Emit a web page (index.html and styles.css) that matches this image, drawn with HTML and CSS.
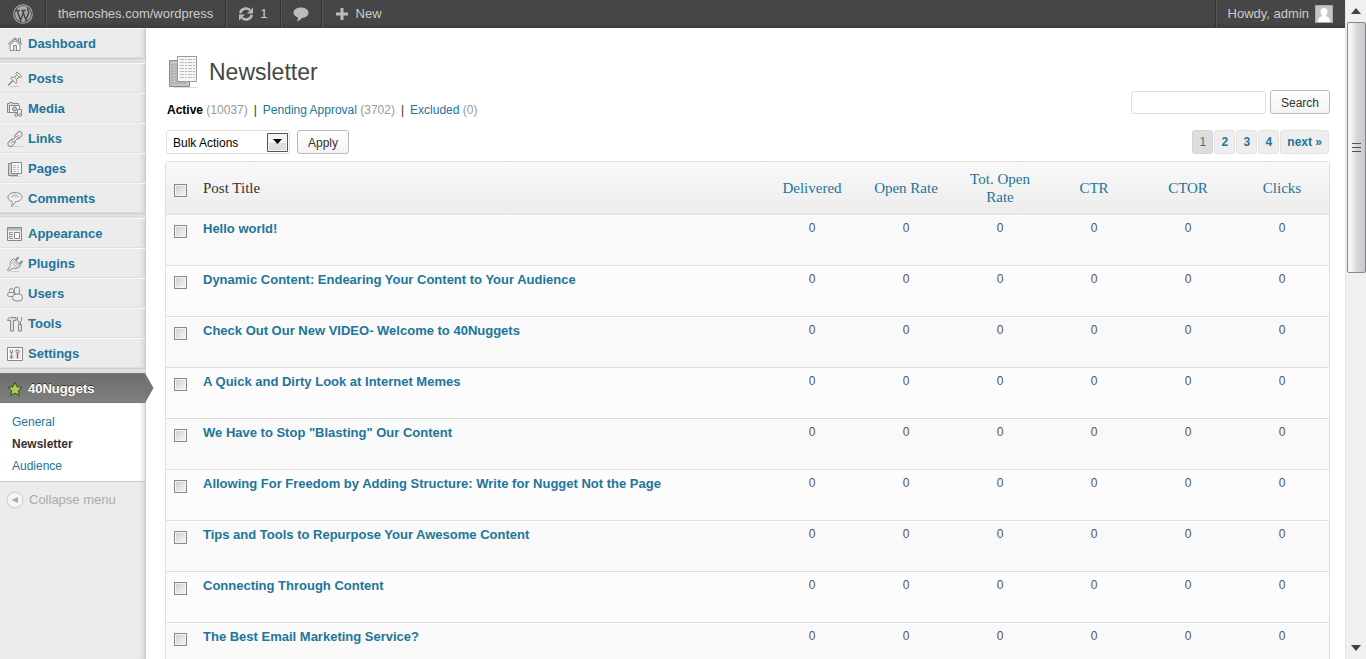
FILE: index.html
```html
<!DOCTYPE html>
<html lang="en">
<head>
  <meta charset="UTF-8">
  <meta name="viewport" content="width=device-width, initial-scale=1.0">
  <title>Newsletter</title>
  <link rel="stylesheet" href="styles.css">
</head>
<body>

<div class="screen">

  <header class="adminbar">
    <a href="#" class="bar-item bar-logo" aria-label="WordPress">
      <svg width="20" height="20" viewBox="0 0 20 20"><circle cx="10" cy="10" r="9.3" fill="none" stroke="#aaa" stroke-width="1.1"/><circle cx="10" cy="10" r="7.9" fill="#aaa"/><path d="M2.6 6.6h4.2M8.4 6.6h4.4M4.2 6.8l3.4 9.4 2.6-7.2M9.6 6.8l3.5 9.4 2.5-7.4c.5-1.6-.9-2.4-.9-3.6 0-.8.4-1.3 1-1.6" fill="none" stroke="#464646" stroke-width="1.5"/></svg>
    </a>
    <a href="#" class="bar-item">themoshes.com/wordpress</a>
    <a href="#" class="bar-item">
      <svg width="16" height="16" viewBox="0 0 16 16"><path d="M2.2 7.2A5.8 5.8 0 0 1 12 4.2M13.8 8.8A5.8 5.8 0 0 1 4 11.8" fill="none" stroke="#bbb" stroke-width="2.4"/><path d="M15 1.4v6H9zM1 14.600V8.600h6z" fill="#bbb"/></svg>
      1
    </a>
    <a href="#" class="bar-item" aria-label="Comments">
      <svg width="16" height="16" viewBox="0 0 16 16"><path d="M8 1.500c4 0 7.500 2.200 7.500 5.200s-3 5-6.800 5.200C7.600 13.800 5.800 15 3.800 15.200c.9-.9 1.300-2.400 1.200-3.700C2.600 10.800.5 9 .5 6.700c0-3 3.500-5.200 7.500-5.200z" fill="#bbb"/></svg>
    </a>
    <a href="#" class="bar-item bar-new">
      <svg width="12" height="12" viewBox="0 0 12 12"><path d="M4.500 0h3v4.500H12v3H7.500V12h-3V7.500H0v-3h4.500z" fill="#bbb"/></svg>
      New
    </a>
    <a href="#" class="bar-item bar-user">
      Howdy, admin
      <svg width="18" height="18" viewBox="0 0 18 18"><path d="M0 0h18v18H0z" fill="#c4c4c4"/><path d="M.5.5h17v17H.5z" fill="none" stroke="#aaa"/><path d="M9 3c2.200 0 3.500 1.500 3.500 3.800 0 1.600-.7 2.900-1.600 3.700.2 1.200 4.100 1.500 4.100 5V17H3v-1.500c0-3.500 3.900-3.800 4.100-5-.9-.8-1.600-2.100-1.600-3.700C5.500 4.500 6.800 3 9 3z" fill="#fff"/></svg>
    </a>
  </header>

  <div class="columns">

    <nav class="menu">
      <ul class="menu-group">
        <li><a href="#"><svg viewBox="0 0 16 16"><path d="M11.500 5V2.500h2V7" fill="#eee" stroke="#888"/><path d="M3 7.500v7h10v-7L8 3z" fill="#fff" stroke="#888"/><path d="M.8 8.500L8 1.700l7.200 6.800M3.500 9L8 4.700 12.500 9" fill="none" stroke="#888"/><path d="M6.500 14.500v-5h3v5" fill="#ddd" stroke="#888"/></svg>Dashboard</a></li>
      </ul>
      <ul class="menu-group">
        <li><a href="#"><svg viewBox="0 0 16 16"><path d="M3 15.500h9" stroke="#ccc"/><path d="M1 14.500l5-5" stroke="#888" stroke-width="1.200"/><path d="M3.500 7c1.200-1 3-1 4-.5l2-2.500-.5-1.500 1-1.500 5 4.500-1.500 1-1.500-.3-2.500 2.300c.5 1.200.3 3-.5 4z" fill="#eee" stroke="#888"/><path d="M7.500 6.500l2.500 2.200M9.500 4l3 2.500" stroke="#999"/></svg>Posts</a></li>
        <li><a href="#"><svg viewBox="0 0 16 16"><path d="M3.500 11.500h-3v-9h2v-1h3v1h6v1" fill="#ddd" stroke="#888"/><path d="M2.500 4.500h10v7h-10z" fill="#f4f4f4" stroke="#888"/><circle cx="7.500" cy="8" r="2" fill="#ccc" stroke="#777"/><path d="M10.500 14.500v-6h4v6" fill="#ececec" stroke="#888"/><circle cx="9.200" cy="14" r="1.400" fill="#eee" stroke="#888"/><circle cx="13.200" cy="14" r="1.400" fill="#eee" stroke="#888"/></svg>Media</a></li>
        <li><a href="#"><svg viewBox="0 0 16 16"><path d="M4 15.500h12" stroke="#ccc"/><g fill="none" stroke="#888"><rect x="7.500" y="1.800" width="8" height="5" rx="2.500" transform="rotate(-45 11.500 4.300)" fill="#eee"/><rect x=".5" y="9.300" width="8" height="5" rx="2.500" transform="rotate(-45 4.500 11.800)" fill="#eee"/><path d="M10.500 5.300l1.800-1.800M3.700 12.600l1.800-1.800"/><path d="M5 9.600l4.600-4.600 1.600 1.600-4.600 4.600z" fill="#f4f4f4"/></g></svg>Links</a></li>
        <li><a href="#"><svg viewBox="0 0 16 16"><path d="M1.500 2.500h9v12h-9z" fill="#ccc" stroke="#888"/><path d="M4.500 1.500h10v11h-10z" fill="#f8f8f8" stroke="#888"/><path d="M6 4.500h7M6 6.500h7M6 8.500h7M6 10.500h7" stroke="#bbb" stroke-dasharray="3 1 2 1"/><path d="M3 15.500h10" stroke="#ccc"/></svg>Pages</a></li>
        <li><a href="#"><svg viewBox="0 0 16 16"><path d="M3 15.500h9" stroke="#ccc"/><path d="M8 1.500c4 0 7 2 7 4.500s-2.500 4.500-6.500 4.700c-.5 2-2 3.300-4 3.800.8-1.200 1-2.700.6-4.100C2.600 9.800 1 8.200 1 6c0-2.500 3-4.500 7-4.500z" fill="#f2f2f2" stroke="#888"/><path d="M3 6.500c1-2 3-3.500 5-3.500s4 1.500 5 3.500z" fill="#ccc"/></svg>Comments</a></li>
      </ul>
      <ul class="menu-group">
        <li><a href="#"><svg viewBox="0 0 16 16"><path d="M.5 1.500h14v13H.5z" fill="#f2f2f2" stroke="#888"/><path d="M1 2h13v2.500H1z" fill="#bbb"/><path d="M7.500 6.500h5v6h-5z" fill="#fff" stroke="#888"/><path d="M2 6.500h4M2 8.500h4M2 10.500h4M2 12.500h4M2.500 6v3M2.500 10v3" fill="none" stroke="#999"/></svg>Appearance</a></li>
        <li><a href="#"><svg viewBox="0 0 16 16"><path d="M3 15.500h9" stroke="#ccc"/><path d="M8.500 5l3-4M12 8.500l3.500-3.500" stroke="#888" stroke-width="2"/><path d="M6.500 2.500l7.500 7c-2.500 2.500-5.500 3.500-8 2.500L1.500 15 .5 14l3-4.500C2.500 7 4.500 4 6.500 2.500z" fill="#eee" stroke="#888"/><path d="M5 6.500l5 5M6 4.500l6 5.500" stroke="#999"/></svg>Plugins</a></li>
        <li><a href="#"><svg viewBox="0 0 16 16"><g fill="#eee" stroke="#888"><rect x="2.500" y="2.500" width="4" height="5" rx="2"/><rect x=".5" y="6.500" width="7" height="4" rx="2"/><rect x="7.500" y="1" width="5" height="7.500" rx="2.500"/><rect x="5.500" y="8" width="10" height="7" rx="3.500"/></g></svg>Users</a></li>
        <li><a href="#"><svg viewBox="0 0 16 16"><path d="M.5 4.500c.5-2 1.500-3 3-3H9v3H6.500V15h-3V4.500z" fill="#ddd" stroke="#888"/><path d="M10.500 1v3.500l1.500 1V9h1.500V5.500l1-1V1" fill="none" stroke="#888"/><path d="M11.500 8.500h3V15h-3z" fill="#ddd" stroke="#888"/></svg>Tools</a></li>
        <li><a href="#"><svg viewBox="0 0 16 16"><path d="M.5 1.500h15v13H.5z" fill="#fff" stroke="#888"/><path d="M2 3h12v10H2z" fill="#ececec"/><path d="M3.500 4v2.500h2V4M4.500 7v2" fill="none" stroke="#888"/><path d="M3.500 9.500h2v3h-2z" fill="#777"/><circle cx="10.500" cy="5.500" r="1.500" fill="none" stroke="#777"/><path d="M10.500 7v5.500" stroke="#777" stroke-width="1.500"/></svg>Settings</a></li>
      </ul>
      <ul class="menu-group">
        <li class="current">
          <a href="#"><svg viewBox="0 0 16 16"><path d="M8 1.200l2 4.600 5 .5-3.700 3.400 1.100 5L8 12.100l-4.400 2.600 1.100-5L1 6.300l5-.5z" fill="#a5d14c" stroke="#3c4a24"/></svg>40Nuggets</a>
          <svg class="menu-arrow" viewBox="0 0 9 30"><path d="M0 0l8.500 15L0 30z" fill="#757575"/></svg>
        </li>
      </ul>
      <ul class="submenu">
        <li><a href="#">General</a></li>
        <li><a href="#" class="active">Newsletter</a></li>
        <li><a href="#">Audience</a></li>
      </ul>
      <button type="button" class="collapse">
        <svg width="18" height="18" viewBox="0 0 18 18"><circle cx="9" cy="9" r="8" fill="#f4f4f4" stroke="#ccc"/><path d="M12 6v6L5.500 9z" fill="#aaa"/></svg>
        Collapse menu
      </button>
    </nav>

    <main class="content">
      <div class="title">
        <svg width="32" height="34" viewBox="0 0 32 34"><path d="M6 32.500h24" stroke="#ddd"/><path d="M1.500 5.500h20v26h-20z" fill="#c4c4c4" stroke="#888"/><path d="M3 10h6M3 13h6M3 16h6M3 19h6M3 22h6M3 25h6M3 28h16" stroke="#999" stroke-dasharray="3 1"/><path d="M9.500 1.500h19v25h-19z" fill="#f6f6f6" stroke="#999"/><path d="M12 4.500h15M12 7.500h15M12 10.500h15M12 13.500h15M12 16.500h15M12 19.500h15M12 22.500h15" stroke="#bbb" stroke-dasharray="4 1 2 1"/></svg>
        <h1>Newsletter</h1>
      </div>

      <div class="filters">
        <ul class="views">
          <li><a href="#" class="active">Active <span>(10037)</span></a></li>
          <li><a href="#">Pending Approval <span>(3702)</span></a></li>
          <li><a href="#">Excluded <span>(0)</span></a></li>
        </ul>
        <form class="search">
          <input type="text" aria-label="Search newsletters">
          <button type="button" class="button">Search</button>
        </form>
      </div>

      <div class="tablenav">
        <div class="bulk">
          <div class="select">
            <select aria-label="Bulk Actions">
              <option>Bulk Actions</option>
            </select>
            <svg width="21" height="19" viewBox="0 0 21 19"><path d="M.5.5h20v18H.5z" fill="#f4f4f4" stroke="#555"/><path d="M2 10h17v7H2z" fill="#ddd"/><path d="M6 6h9l-4.500 5z" fill="#000"/></svg>
          </div>
          <button type="button" class="button">Apply</button>
        </div>
        <div class="pages">
          <a href="#" class="active">1</a>
          <a href="#">2</a>
          <a href="#">3</a>
          <a href="#">4</a>
          <a href="#">next »</a>
        </div>
      </div>

      <table class="posts">
        <thead>
          <tr>
            <th class="check"><input type="checkbox" aria-label="Select all"></th>
            <th class="name">Post Title</th>
            <th><a href="#">Delivered</a></th>
            <th><a href="#">Open Rate</a></th>
            <th><a href="#">Tot. Open Rate</a></th>
            <th><a href="#">CTR</a></th>
            <th><a href="#">CTOR</a></th>
            <th><a href="#">Clicks</a></th>
          </tr>
        </thead>
        <tbody>
          <tr>
            <td class="check"><input type="checkbox" aria-label="Select post"></td>
            <td class="name"><a href="#">Hello world!</a></td>
            <td>0</td><td>0</td><td>0</td><td>0</td><td>0</td><td>0</td>
          </tr>
          <tr>
            <td class="check"><input type="checkbox" aria-label="Select post"></td>
            <td class="name"><a href="#">Dynamic Content: Endearing Your Content to Your Audience</a></td>
            <td>0</td><td>0</td><td>0</td><td>0</td><td>0</td><td>0</td>
          </tr>
          <tr>
            <td class="check"><input type="checkbox" aria-label="Select post"></td>
            <td class="name"><a href="#">Check Out Our New VIDEO- Welcome to 40Nuggets</a></td>
            <td>0</td><td>0</td><td>0</td><td>0</td><td>0</td><td>0</td>
          </tr>
          <tr>
            <td class="check"><input type="checkbox" aria-label="Select post"></td>
            <td class="name"><a href="#">A Quick and Dirty Look at Internet Memes</a></td>
            <td>0</td><td>0</td><td>0</td><td>0</td><td>0</td><td>0</td>
          </tr>
          <tr>
            <td class="check"><input type="checkbox" aria-label="Select post"></td>
            <td class="name"><a href="#">We Have to Stop "Blasting" Our Content</a></td>
            <td>0</td><td>0</td><td>0</td><td>0</td><td>0</td><td>0</td>
          </tr>
          <tr>
            <td class="check"><input type="checkbox" aria-label="Select post"></td>
            <td class="name"><a href="#">Allowing For Freedom by Adding Structure: Write for Nugget Not the Page</a></td>
            <td>0</td><td>0</td><td>0</td><td>0</td><td>0</td><td>0</td>
          </tr>
          <tr>
            <td class="check"><input type="checkbox" aria-label="Select post"></td>
            <td class="name"><a href="#">Tips and Tools to Repurpose Your Awesome Content</a></td>
            <td>0</td><td>0</td><td>0</td><td>0</td><td>0</td><td>0</td>
          </tr>
          <tr>
            <td class="check"><input type="checkbox" aria-label="Select post"></td>
            <td class="name"><a href="#">Connecting Through Content</a></td>
            <td>0</td><td>0</td><td>0</td><td>0</td><td>0</td><td>0</td>
          </tr>
          <tr>
            <td class="check"><input type="checkbox" aria-label="Select post"></td>
            <td class="name"><a href="#">The Best Email Marketing Service?</a></td>
            <td>0</td><td>0</td><td>0</td><td>0</td><td>0</td><td>0</td>
          </tr>
        </tbody>
      </table>
    </main>

  </div>
</div>

<div class="scrollbar">
  <svg width="10" height="6" viewBox="0 0 10 6"><path d="M5 0l5 6H0z" fill="#444"/></svg>
  <div class="thumb"><span></span><span></span><span></span></div>
  <svg width="10" height="6" viewBox="0 0 10 6"><path d="M0 0h10L5 6z" fill="#444"/></svg>
</div>

</body>
</html>
```
FILE: styles.css
```css
* {
  box-sizing: border-box;
}

body {
  margin: 0;
  height: 100vh;
  display: flex;
  overflow: hidden;
  background: #fff;
  color: #333;
  font: 12px/18px "Liberation Sans", Arial, sans-serif;
}

a {
  color: #21759b;
  text-decoration: none;
}

ul {
  list-style: none;
  margin: 0;
  padding: 0;
}

button, input, select {
  font: inherit;
}

svg {
  flex: none;
}

.screen {
  flex: 1;
  min-width: 0;
  display: flex;
  flex-direction: column;
  overflow: hidden;
}

/* Admin bar */
.adminbar {
  display: flex;
  flex: none;
  height: 28px;
  background: linear-gradient(#464646 80%, #3c3c3c);
}

.bar-item {
  display: flex;
  align-items: center;
  gap: 6px;
  padding: 0 12px;
  border-right: 1px solid #333;
  box-shadow: 1px 0 #555;
  color: #ccc;
  font-size: 13px;
}

.bar-logo {
  padding: 0 12px 0 13px;
}

.bar-new {
  gap: 8px;
  padding-left: 14px;
  border: 0;
  box-shadow: none;
}

.bar-user {
  margin-left: auto;
  border-right: 0;
  border-left: 1px solid #333;
  box-shadow: inset 1px 0 #555;
}

/* Side menu */
.columns {
  flex: 1;
  min-height: 0;
  display: flex;
}

.menu {
  flex: none;
  width: 146px;
  background: #ececec;
  border-right: 1px solid #ccc;
  box-shadow: inset -6px 0 6px -6px #bbb;
}

.menu-group {
  margin-bottom: 4px;
  border-bottom: 1px solid #ccc;
  box-shadow: 0 4px #dfdfdf;
}

.menu-group li {
  position: relative;
}

.menu-group a {
  display: flex;
  align-items: center;
  gap: 5px;
  height: 30px;
  padding: 2px 0 0 7px;
  border-top: 1px solid #f9f9f9;
  border-bottom: 1px solid #dfdfdf;
  font-size: 13px;
  font-weight: bold;
}

.menu-group svg {
  width: 16px;
  height: 16px;
}

.menu-group .current a {
  background: linear-gradient(#6d6d6d, #808080);
  border-color: #777;
  color: #fff;
  text-shadow: 0 -1px #333;
}

.menu-group .menu-arrow {
  position: absolute;
  top: 0;
  left: 100%;
  width: 9px;
  height: 30px;
}

.menu-group:nth-of-type(4) {
  margin: 0;
  border: 0;
  box-shadow: none;
}

.submenu {
  padding: 8px 0 4px;
  background: #fff;
  border-bottom: 1px solid #ccc;
  box-shadow: inset -6px 0 6px -6px #bbb;
}

.submenu a {
  display: block;
  padding-left: 12px;
  line-height: 22px;
}

.submenu .active {
  color: #333;
  font-weight: bold;
}

.collapse {
  display: flex;
  align-items: center;
  gap: 5px;
  height: 36px;
  padding: 0 6px;
  border: 0;
  background: none;
  color: #aaa;
  font-size: 13px;
}

/* Content */
.content {
  flex: 1;
  min-width: 0;
  padding: 26px 15px 0 19px;
}

.title {
  display: flex;
  align-items: center;
  gap: 9px;
  height: 36px;
  padding-left: 3px;
}

h1 {
  margin: 0;
  color: #464646;
  font-size: 23px;
  font-weight: normal;
  line-height: 32px;
}

.filters {
  display: flex;
  justify-content: space-between;
  height: 24px;
}

.views {
  display: flex;
  padding: 11px 0 0 2px;
}

.views li + li::before {
  content: "|";
  margin: 0 6px;
}

.views span {
  color: #999;
  font-weight: normal;
}

.views .active {
  color: #000;
  font-weight: bold;
}

.search {
  display: flex;
  align-items: end;
  gap: 4px;
}

.search input {
  width: 135px;
  height: 23px;
  border: 1px solid #dfdfdf;
  border-radius: 3px;
}

.button {
  height: 24px;
  padding: 1px 10px 0;
  border: 1px solid #bbb;
  border-radius: 3px;
  background: linear-gradient(#fff, #f4f4f4);
  color: #333;
}

.tablenav {
  display: flex;
  justify-content: space-between;
  align-items: center;
  margin: 16px 0 7px;
}

.bulk {
  display: flex;
  gap: 7px;
  padding-left: 1px;
}

.select {
  position: relative;
}

.select select {
  width: 124px;
  height: 24px;
  padding: 1px 6px 0;
  appearance: none;
  border: 1px solid #dfdfdf;
  border-radius: 3px;
  background: #fff;
  color: #000;
}

.select svg {
  position: absolute;
  top: 3px;
  right: 2px;
  pointer-events: none;
}

.pages {
  display: flex;
  gap: 1px;
  padding-right: 1px;
}

.pages a {
  min-width: 21px;
  padding: 1px 6px;
  border: 1px solid #e3e3e3;
  border-radius: 3px;
  background: #eee;
  font-weight: bold;
  line-height: 20px;
  text-align: center;
}

.pages .active {
  border-color: #d3d3d3;
  background: #ddd;
  color: #666;
  font-weight: normal;
}

/* Posts table */
.posts {
  width: 100%;
  table-layout: fixed;
  border: 1px solid #dfdfdf;
  border-radius: 3px;
  border-spacing: 0;
  background: #f9f9f9;
}

.posts th, .posts td {
  width: 94px;
  padding: 3px 7px;
  border-bottom: 1px solid #dfdfdf;
  text-align: center;
}

.posts th {
  height: 53px;
  font: 15px/18px "Liberation Serif", Georgia, serif;
}

.posts thead {
  background: linear-gradient(#f9f9f9, #ececec);
}

.posts td {
  height: 51px;
  border-top: 1px solid #fff;
  color: #555;
  vertical-align: top;
}

.posts tbody tr:nth-child(even) {
  background: #fcfcfc;
}

.posts .check {
  width: 30px;
  padding: 9px 0 0 8px;
  text-align: left;
}

.posts .check input {
  display: block;
  width: 13px;
  height: 13px;
  margin: 0;
  appearance: none;
  border: 1px solid #888;
  background: linear-gradient(135deg, #ccc, #f9f9f9);
  box-shadow: inset 0 0 0 1px #f4f4f4;
}

.posts thead .check {
  padding-top: 4px;
}

.posts .name {
  width: auto;
  text-align: left;
}

.posts td.name {
  padding-top: 4px;
  font-size: 13px;
  font-weight: bold;
}

/* Window scroll bar */
.scrollbar {
  flex: none;
  width: 21px;
  display: flex;
  flex-direction: column;
  align-items: center;
  padding: 8px 0;
  border-left: 1px solid #e3e3e3;
  background: #f0f0f0;
}

.thumb {
  width: 19px;
  height: 39%;
  margin: 8px 0 auto;
  display: flex;
  flex-direction: column;
  align-items: center;
  justify-content: center;
  gap: 3px;
  border: 1px solid #888;
  border-radius: 2px;
  background: linear-gradient(90deg, #f4f4f4 20%, #d8d8dc 50%, #c8c8cc);
}

.thumb span {
  width: 9px;
  height: 1px;
  background: #555;
}
```
